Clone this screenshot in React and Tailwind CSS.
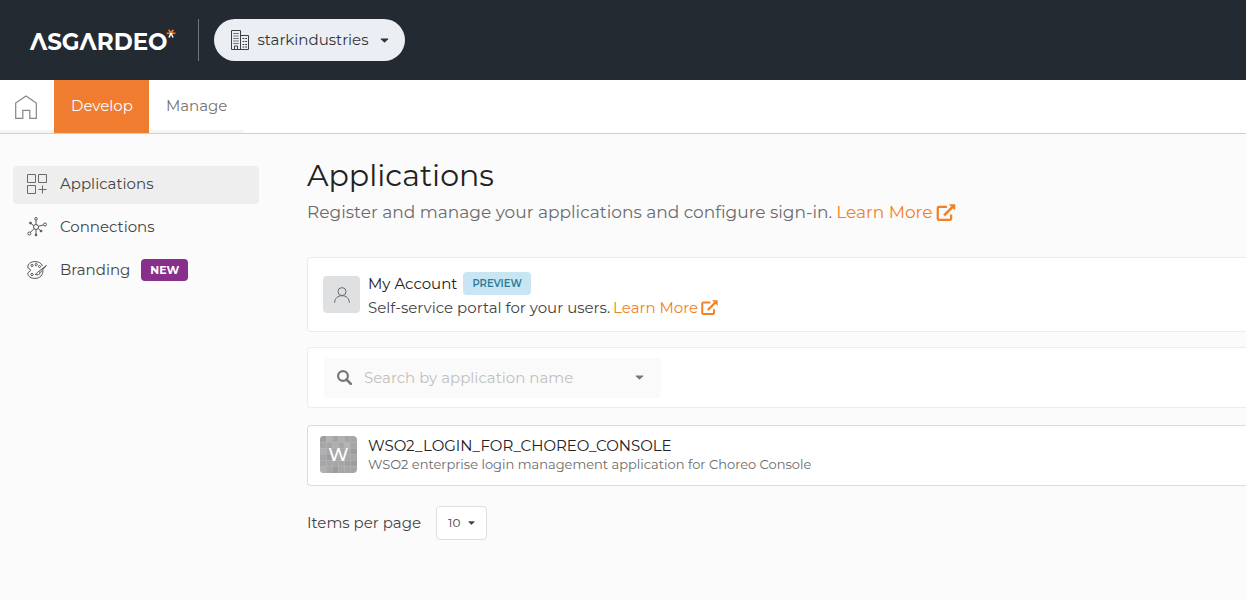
import React from "react";

function Caret({ className }) {
  return (
    <svg viewBox="0 0 10 6" className={className} fill="currentColor" aria-hidden="true">
      <path d="M1 .5h8c.6 0 .8.6.4 1L5.600 5.200a.9.9 0 0 1-1.200 0L.6 1.500C.2 1.100.4.500 1 .5Z" />
    </svg>
  );
}

function ExternalIcon({ className }) {
  return (
    <svg viewBox="0 0 20 18" className={className} fill="none" stroke="currentColor" aria-hidden="true">
      <path d="M11 3H2.500A1.200 1.200 0 0 0 1.300 4.200v11.300a1.200 1.200 0 0 0 1.200 1.200h11.700a1.200 1.200 0 0 0 1.200-1.200V11" strokeWidth="2.400" />
      <path d="M8 12 17 3" strokeWidth="2.800" />
      <path d="M13 .3h6.300c.3 0 .5.200.5.500v6.200Z" fill="currentColor" stroke="none" />
    </svg>
  );
}

function LogoSpark() {
  return (
    <svg viewBox="0 0 10 10" className="-ml-px mb-4 size-[10px]" aria-hidden="true">
      <path d="M5 4 2.600.8M5 4 7.400.8M.6 4.300 5 4l4.400.3" stroke="#f47b20" strokeWidth="1.700" fill="none" />
      <path d="M5 4 3 8.500M5 4l2 4.500" stroke="#fff" strokeWidth="1.500" fill="none" />
    </svg>
  );
}

function BuildingIcon() {
  return (
    <svg viewBox="0 0 18 20" className="h-5 w-[18px]" fill="none" stroke="#3c4045" aria-hidden="true">
      <path d="M.5 19.500V.5h9v19M9.500 5.500h8v14H.5" />
      <path d="M3.500 19.500v-3.500h3v3.500" />
      <path d="M2.500 3.500h5M2.500 6h5M2.500 8.500h5M2.500 11h5M2.500 13.500h5" strokeDasharray="1.300 .6" />
      <path d="M11.500 8.500h4.500M11.500 11.500h4.500M11.500 14.500h4.500M11.500 17h4.500" strokeDasharray="1.800 .9" />
    </svg>
  );
}

function HomeIcon() {
  return (
    <svg viewBox="0 0 22 24" className="h-6 w-[22px]" fill="none" stroke="#858585" strokeWidth="1.200" aria-hidden="true">
      <path d="M.7 23.300V8L11 .9 21.300 8v15.300h-6.500v-8H7.800v8Z" />
    </svg>
  );
}

function AppsIcon() {
  return (
    <svg viewBox="0 0 20 20" className="size-5" fill="none" stroke="#6a6a6a" aria-hidden="true">
      <path d="M.5.5h8v8h-8ZM11.500.5h8v8h-8ZM.5 11.500h8v8h-8ZM15.500 11.500v8M11.500 15.500h8" />
    </svg>
  );
}

function ConnectionsIcon() {
  return (
    <svg viewBox="0 0 20 20" className="size-5" fill="none" stroke="#555" aria-hidden="true">
      <circle cx="9" cy="10" r="2.500" />
      <circle cx="9" cy="1.800" r="1.300" />
      <circle cx="18" cy="7.500" r="1.500" />
      <circle cx="2.300" cy="16.500" r="1.500" />
      <circle cx="3.500" cy="6" r=".9" fill="#555" />
      <circle cx="9" cy="18" r=".9" fill="#555" />
      <circle cx="14" cy="14" r=".9" fill="#555" />
      <path d="M9 3.200v4.300M11.500 9.300l5-1.500M7 11.700l-3.600 3.700M6.800 8.700 4 6.500M9 12.500V17.500M11.200 11.500l2.500 2.200" />
    </svg>
  );
}

function BrandingIcon() {
  return (
    <svg viewBox="0 0 20 18" className="h-[18px] w-5" fill="none" stroke="#555" aria-hidden="true">
      <path d="M15.500 5C14.500 2 11.500.6 8 .6 3.500.6.8 3 .8 6c0 2 2.700 1.500 2.700 3.200S.8 10.500.8 12.500C.8 15.500 4 17.400 8 17.400c5 0 8-3.400 8-8" />
      <circle cx="5" cy="4.500" r="1.100" />
      <circle cx="9.200" cy="3.600" r="1.100" />
      <circle cx="12.500" cy="5.500" r="1" />
      <circle cx="5" cy="13.500" r="1.200" />
      <path d="M19.400 4.500 11.800 10.300l1.200 1.500ZM11.800 10.300c-1.600.2-1.500 2.700-3.500 3.100 2.300 1 4.600.4 4.700-1.600" />
    </svg>
  );
}

function SearchIcon() {
  return (
    <svg viewBox="0 0 15 15" className="size-[15px] text-[#777]" fill="none" stroke="currentColor" aria-hidden="true">
      <circle cx="6" cy="6" r="4.900" strokeWidth="2.200" />
      <path d="m9.500 9.500 4.300 4.300" strokeWidth="2.600" strokeLinecap="round" />
    </svg>
  );
}

function UserIcon() {
  return (
    <svg viewBox="0 0 16 16" className="size-4" fill="none" stroke="#6b6b6b" aria-hidden="true">
      <circle cx="8" cy="4.600" r="4" />
      <path d="M.6 15.800C.9 11 4 8.700 8 8.700s7.100 2.300 7.400 7.100" />
    </svg>
  );
}

const tiles = [
  [0, 0, 6, 6, "#9f9f9f"], [6, 0, 6, 6, "#b2b2b2"], [18, 0, 6, 6, "#b0b0b0"],
  [24, 6, 6, 6, "#b4b4b4"], [0, 12, 6, 6, "#b0b0b0"], [30, 12, 7, 6, "#9c9c9c"],
  [6, 18, 6, 6, "#9d9d9d"], [24, 24, 6, 6, "#a0a0a0"], [12, 30, 6, 7, "#9b9b9b"],
  [0, 30, 6, 7, "#b0b0b0"], [30, 24, 7, 6, "#9d9d9d"], [12, 6, 6, 6, "#afafaf"],
];

function AppTile() {
  return (
    <div className="grid size-[37px] shrink-0 place-items-center overflow-hidden rounded bg-[#a6a6a6]">
      <svg viewBox="0 0 37 37" className="col-start-1 row-start-1 size-[37px]" aria-hidden="true">
        {tiles.map(([x, y, w, h, fill]) => (
          <rect key={`${x}-${y}`} x={x} y={y} width={w} height={h} fill={fill} />
        ))}
        <path d="M6.500 0v37M12.500 0v37M18.500 0v37M24.500 0v37M30.500 0v37M0 6.500h37M0 12.500h37M0 18.500h37M0 24.500h37M0 30.500h37" stroke="#b5b5b5" strokeWidth=".6" />
      </svg>
      <span className="col-start-1 row-start-1 pt-0.5 text-[18px] font-medium text-white">W</span>
    </div>
  );
}

const sideItem = "flex h-[38px] items-center rounded px-3.5 pb-0.5 text-[15px] text-[#444]";

export default function App() {
  return (
    <div className="min-h-screen bg-white pr-0.5 pb-1 font-['Montserrat','Inter',sans-serif] text-[#444]">
      <div className="flex min-h-[600px] flex-col bg-[#fbfbfb]">
        <header className="flex h-20 items-center bg-[#242a32] pl-[30px]">
          <a href="#" aria-label="Asgardeo" className="flex items-center pt-1 text-white">
            <span className="text-[23px] leading-6 font-bold">ΛSGΛRDEO</span>
            <LogoSpark />
          </a>
          <div className="ml-[22px] h-[42px] w-px bg-[#73777d]" />
          <button type="button" className="ml-[15px] flex h-[42px] items-center rounded-full bg-[#ebeef3] pr-4 pl-[17px] text-[15px] text-[#30343a]">
            <BuildingIcon />
            <span className="ml-2">starkindustries</span>
            <Caret className="ml-3 h-[5px] w-[9px]" />
          </button>
        </header>

        <nav className="flex h-[54px] border-b border-[#cfcfcf] bg-white text-[15px]">
          <a href="#" aria-label="Home" className="flex w-[54px] items-center pl-[15px] shadow-[inset_0_-3px_0_#f5f5f5]"><HomeIcon /></a>
          <a href="#" className="flex items-center bg-[#f07c30] pr-4 pl-[17px] text-white">Develop</a>
          <a href="#" className="flex items-center px-[17px] text-[#757575] shadow-[inset_0_-3px_0_#f5f5f5]">Manage</a>
        </nav>

        <div className="flex flex-1">
          <aside className="flex w-[259px] shrink-0 flex-col gap-[5px] pt-8 pl-[13px]">
            <a href="#" className={`${sideItem} bg-[#eee]`}><AppsIcon /><span className="ml-[13px]">Applications</span></a>
            <a href="#" className={sideItem}><ConnectionsIcon /><span className="ml-[13px]">Connections</span></a>
            <a href="#" className={sideItem}>
              <BrandingIcon />
              <span className="ml-[13px]">Branding</span>
              <span className="ml-[11px] flex h-[22px] items-center rounded bg-[#872f8a] px-[9px] text-[11px] font-bold text-white">NEW</span>
            </a>
          </aside>

          <main className="min-w-0 flex-1 pt-[22px] pl-12">
            <h1 className="text-[30px] leading-10 text-[#222]">Applications</h1>
            <p className="mt-1 flex items-center text-[17px] leading-6 text-[#6b6b6b]">
              Register and manage your applications and configure sign-in.
              <a href="#" className="ml-1 flex items-center gap-1 text-[#f28124]">Learn More<ExternalIcon className="h-[17px] w-5" /></a>
            </p>

            <section className="mt-[33px] flex h-[75px] items-center rounded-l border border-r-0 border-[#ebebeb] bg-white pl-[15px]">
              <div className="grid size-[37px] place-items-center rounded bg-[#dfe0e1]"><UserIcon /></div>
              <div className="ml-2 pt-0.5">
                <h2 className="flex items-center text-[15px] leading-6 text-[#222]">
                  My Account
                  <span className="ml-1.5 flex h-[23px] items-center rounded bg-[#c8e5f3] px-[9px] text-[10px] font-semibold text-[#2d7b97]">PREVIEW</span>
                </h2>
                <p className="flex items-center text-[15px] leading-6">
                  Self-service portal for your users.
                  <a href="#" className="ml-[3px] flex items-center gap-[3px] text-[#f28124]">Learn More<ExternalIcon className="h-[15px] w-[17px]" /></a>
                </p>
              </div>
            </section>

            <section className="mt-[15px] flex h-[61px] items-center rounded-l border border-r-0 border-[#ededed] bg-white pl-4">
              <div className="flex h-10 w-[337px] items-center rounded bg-[#fafafa] pr-[15px] pl-[13px]">
                <SearchIcon />
                <input type="text" aria-label="Search by application name" placeholder="Search by application name" className="ml-3 min-w-0 flex-1 bg-transparent pt-0.5 text-[15px] outline-none placeholder:text-[#c1c1c1]" />
                <button type="button" aria-label="Advanced search" className="px-0.5 text-[#777]"><Caret className="h-[5px] w-[9px]" /></button>
              </div>
            </section>

            <section className="mt-[17px] flex h-[61px] items-center rounded-l border border-r-0 border-[#dcdcdc] bg-white pb-0.5 pl-3">
              <AppTile />
              <div className="ml-[11px]">
                <h2 className="text-[15px] leading-[18px] text-[#222]">WSO2_LOGIN_FOR_CHOREO_CONSOLE</h2>
                <p className="text-[13px] leading-[18px] text-[#6b6b6b]">WSO2 enterprise login management application for Choreo Console</p>
              </div>
            </section>

            <div className="mt-5 flex items-center">
              <label htmlFor="page-size" className="text-[15px]">Items per page</label>
              <div className="relative ml-[15px]">
                <select id="page-size" defaultValue="10" className="h-[34px] w-[51px] appearance-none rounded border border-[#dedede] bg-white pl-[11px] text-[12px] text-[#444]">
                  <option>10</option>
                  <option>20</option>
                  <option>50</option>
                </select>
                <Caret className="pointer-events-none absolute top-[15px] right-3 h-1 w-[7px]" />
              </div>
            </div>
          </main>
        </div>
      </div>
    </div>
  );
}
